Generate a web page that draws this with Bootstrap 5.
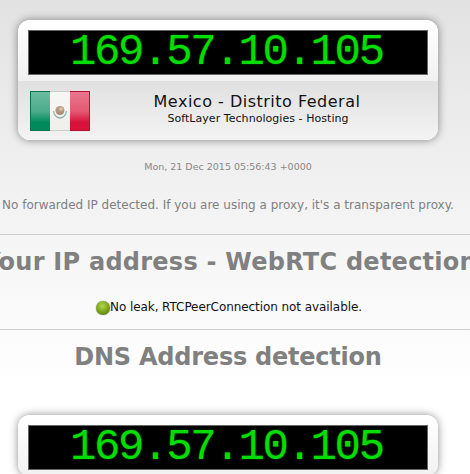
<!DOCTYPE html>
<html lang="en">
<head>
<meta charset="utf-8">
<title>IP address detection</title>
<link href="https://cdn.jsdelivr.net/npm/bootstrap@5.3.0/dist/css/bootstrap.min.css" rel="stylesheet">
<style>
html,body{height:474px;overflow:hidden}
body{background:linear-gradient(#e2e2e2 0,#f3f3f3 210px,#fff 385px,#fff 100%);font-family:"DejaVu Sans","Liberation Sans",sans-serif;color:#000;padding-top:20px}
.ip-box{width:420px;margin-left:18px;border-radius:12px;background:#fff;box-shadow:0 0 8px rgba(0,0,0,.45);overflow:hidden;flex:none}
.ip-top{padding:10px;height:61px;background:linear-gradient(#fff,#f1f1f1)}
.led{height:45px;background:#000;border:1px solid #666;color:#0d0;font-family:"Liberation Mono",monospace;font-size:44px;line-height:43px;padding-left:41px;letter-spacing:-2.35px;text-shadow:0 0 2px rgba(0,255,0,.4);white-space:nowrap}
.ip-bottom{height:59px;background:linear-gradient(#e0e0e0,#f3f3f3);padding:10px 12px 0}
.place{font-size:16px;line-height:20px;letter-spacing:.5px;color:#111;margin:1px 2px 0 0}
.isp{font-size:11px;line-height:13px;letter-spacing:.05px;color:#111}
.cw{width:456px;flex:none}
.stamp{margin-top:21px;font-size:9.5px;line-height:12px;color:#888;text-align:center}
.fwd{margin-top:25px;font-size:12px;line-height:14px;color:#808080;text-align:center;white-space:nowrap}
.rule{margin:22px 0 0;border:0;border-top:1px solid #ccc;opacity:1;height:0}
.sect-title{font-family:"DejaVu Sans",sans-serif;font-weight:700;font-size:24px;line-height:32px;letter-spacing:-.24px;color:#808080;white-space:nowrap;margin:11px 0 0}
.sect-wide{width:460px;letter-spacing:.25px}
.leak{margin-top:21px;font-size:12px;line-height:16px;letter-spacing:-.07px;color:#111}
.rule2{margin-top:14px}
.dot{width:14px;height:14px;border-radius:50%;background:radial-gradient(circle at 45% 35%,#b5d84a,#6f9a12 60%,#3d5e08);box-shadow:0 0 1px #444;flex:none;margin:2px 0 0 2px}
.gap2{margin-top:42px}
</style>
</head>
<body class="d-flex flex-column">
<div class="ip-box">
  <div class="ip-top"><div class="led">169.57.10.105</div></div>
  <div class="ip-bottom d-flex">
    <svg width="60" height="40" viewBox="0 0 60 40" class="flex-shrink-0" aria-label="Flag of Mexico">
      <defs><linearGradient id="gl" x1="0" y1="0" x2="0" y2="1"><stop offset="0" stop-color="#fff" stop-opacity=".42"/><stop offset=".5" stop-color="#fff" stop-opacity=".3"/><stop offset=".8" stop-color="#fff" stop-opacity="0"/></linearGradient></defs>
      <rect width="20" height="40" fill="#008a5c"/><rect x="20" width="20" height="40" fill="#f0f0ec"/><rect x="40" width="20" height="40" fill="#d8133a"/>
      <ellipse cx="30" cy="19.5" rx="4.5" ry="4.5" fill="#8f6d4c"/><ellipse cx="31" cy="18" rx="2" ry="1.8" fill="#c9a46f"/><path d="M23.500 20q1 6.500 6.500 7q5.500-.5 6.500-7" fill="none" stroke="#7aa69a" stroke-width="1.500"/>
      <rect x="1" y="1" width="58" height="38" fill="url(#gl)"/>
      <rect x=".5" y=".5" width="59" height="39" fill="none" stroke="#000" stroke-opacity=".15"/>
    </svg>
    <div class="flex-grow-1 text-center">
      <div class="place">Mexico - Distrito Federal</div>
      <div class="isp">SoftLayer Technologies - Hosting</div>
    </div>
  </div>
</div>
<div class="stamp cw">Mon, 21 Dec 2015 05:56:43 +0000</div>
<div class="fwd cw">No forwarded IP detected. If you are using a proxy, it's a transparent proxy.</div>
<hr class="rule">
<div class="sect-title sect-wide d-flex justify-content-center">Your IP address - WebRTC detection</div>
<div class="leak cw d-flex justify-content-center"><span class="dot"></span><span>No leak, RTCPeerConnection not available.</span></div>
<hr class="rule rule2">
<div class="sect-title cw d-flex justify-content-center">DNS Address detection</div>
<div class="ip-box gap2">
  <div class="ip-top"><div class="led">169.57.10.105</div></div>
</div>
</body>
</html>
